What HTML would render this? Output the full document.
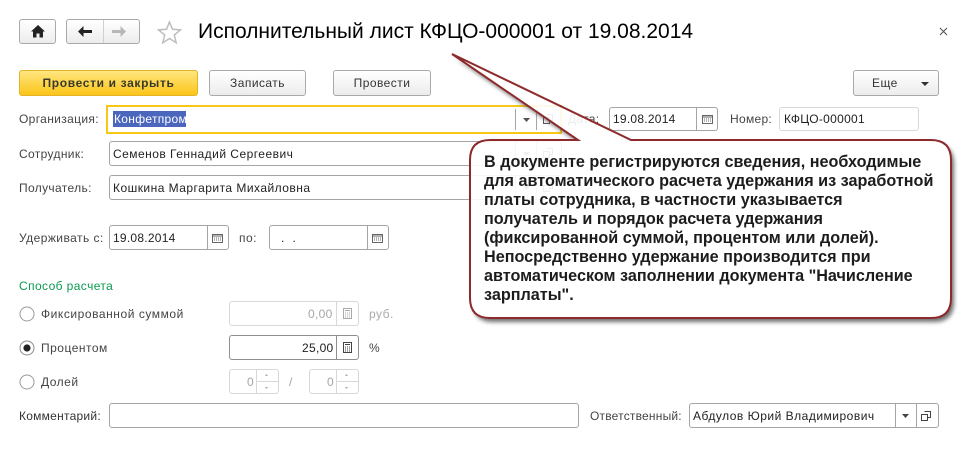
<!DOCTYPE html>
<html><head><meta charset="utf-8"><style>
html,body{margin:0;padding:0;background:#fff}
#p{position:relative;width:965px;height:471px;overflow:hidden;background:#fff;font-family:"Liberation Sans",Arial,sans-serif;font-size:12px;color:#333}
.t{position:absolute;white-space:nowrap;line-height:16px;letter-spacing:.5px}
.b{position:absolute;box-sizing:border-box;border:1px solid #a5a5a5;border-radius:3px;background:#fff}
.btn{position:absolute;box-sizing:border-box;border:1px solid #a9a9a9;border-radius:3px;background:linear-gradient(#fff,#ececec);text-align:center;line-height:25px;letter-spacing:.45px;color:#333}
.dv{position:absolute;top:0;bottom:0;width:1px;background:#a5a5a5}
svg{position:absolute;overflow:visible}
.l{position:absolute;left:484px;white-space:nowrap;font-weight:bold;font-size:16.2px;line-height:19px;color:#1c1c1c}
</style></head><body><div id="p">

<div class="btn" style="left:19px;top:19px;width:37px;height:25px"></div>
<svg style="left:30px;top:25px" width="16" height="13" viewBox="0 0 16 13"><path d="M8 0L15 6.500H13V12.500H9.500V8.500H6.500V12.500H3V6.500H1Z" fill="#222"/></svg>
<div class="btn" style="left:66px;top:19px;width:74px;height:25px"><div class="dv" style="left:36px;background:#d0d0d0"></div></div>
<svg style="left:78px;top:26px" width="15" height="11" viewBox="0 0 15 11"><path d="M0 5.500L5.500 0V4H14V7H5.500V11Z" fill="#222"/></svg>
<svg style="left:112px;top:26px" width="15" height="11" viewBox="0 0 15 11"><path d="M14 5.500L8.500 0V4H0V7H8.500V11Z" fill="#b8b8b8"/></svg>
<svg style="left:157px;top:20px" width="25" height="24" viewBox="0 0 25 24"><path d="M12.500 2L15.500 9.300L23.400 9.900L17.300 15L19.200 22.700L12.500 18.500L5.800 22.700L7.700 15L1.600 9.900L9.500 9.300Z" fill="#fff" stroke="#bdbdbd" stroke-width="1.500"/></svg>
<div class="t" style="left:198px;top:20px;font-size:21px;line-height:24px;color:#000;letter-spacing:0">Исполнительный лист КФЦО-000001 от 19.08.2014</div>
<svg style="left:939px;top:27px" width="9" height="9"><path d="M1 1L8 8M8 1L1 8" stroke="#555" stroke-width="1.100"/></svg>

<div class="btn" style="left:19px;top:70px;width:179px;height:26px;background:linear-gradient(#ffe680,#fbc519);border-color:#e3b32a;font-weight:bold;color:#3a3a2a;letter-spacing:.65px">Провести и закрыть</div>
<div class="btn" style="left:209px;top:70px;width:97px;height:26px">Записать</div>
<div class="btn" style="left:333px;top:70px;width:98px;height:26px">Провести</div>
<div class="btn" style="left:853px;top:70px;width:86px;height:26px;text-align:left;padding-left:18px">Еще</div>
<svg style="left:921px;top:82px" width="8" height="4"><path d="M0 0H8L4 4Z" fill="#333"/></svg>

<div class="t" style="left:19px;top:111px;color:#444;letter-spacing:.35px">Организация:</div>
<div class="b" style="left:106px;top:105px;width:456px;height:29px;border:2px solid #f7c816;border-radius:0"></div>
<div style="position:absolute;left:113px;top:111px;width:73px;height:16px;background:#4b66bd"></div>
<div class="t" style="left:114px;top:111px;color:#fff;letter-spacing:.3px">Конфетпром</div>
<div class="dv" style="left:515px;top:109px;bottom:auto;height:21px"></div>
<svg style="left:523px;top:118px" width="7" height="4"><path d="M0 0H7L3.500 4Z" fill="#555"/></svg>
<div class="dv" style="left:536px;top:109px;bottom:auto;height:21px"></div>
<svg style="left:543px;top:114px" width="10" height="10"><path d="M3.500 .5H9.500V6.500H6.500M.5 3.500H6.500V9.500H.5Z" fill="none" stroke="#555"/></svg>

<div class="t" style="left:568px;top:111px;color:#444;letter-spacing:.3px">Дата:</div>
<div class="b" style="left:609px;top:107px;width:109px;height:24px"><div class="dv" style="left:86px;"></div></div>
<div class="t" style="left:613px;top:111px;letter-spacing:.25px;color:#222">19.08.2014</div>
<svg style="left:702px;top:115px" width="11" height="9"><rect x=".5" y=".5" width="10" height="8" fill="#fff" stroke="#666"/><path d="M1 2H10" stroke="#666"/><path d="M2 4h7M2 6h7" stroke="#666" stroke-dasharray="1 1"/></svg>
<div class="t" style="left:730px;top:111px;color:#444;letter-spacing:.3px">Номер:</div>
<div class="b" style="left:779px;top:107px;width:140px;height:24px;border-color:#d8d8d8"></div>
<div class="t" style="left:784px;top:111px;letter-spacing:.3px;color:#222">КФЦО-000001</div>

<div class="t" style="left:19px;top:146px;color:#444;letter-spacing:.35px">Сотрудник:</div>
<div class="b" style="left:109px;top:141px;width:453px;height:25px"><div class="dv" style="left:405px"></div><div class="dv" style="left:426px"></div></div>
<div class="t" style="left:113px;top:146px;color:#222;letter-spacing:.47px">Семенов Геннадий Сергеевич</div>
<svg style="left:523px;top:152px" width="7" height="4"><path d="M0 0H7L3.500 4Z" fill="#555"/></svg>
<svg style="left:543px;top:148px" width="10" height="10"><path d="M3.500 .5H9.500V6.500H6.500M.5 3.500H6.500V9.500H.5Z" fill="none" stroke="#555"/></svg>
<div class="t" style="left:19px;top:180px;color:#444;letter-spacing:.35px">Получатель:</div>
<div class="b" style="left:109px;top:175px;width:453px;height:25px"><div class="dv" style="left:405px"></div><div class="dv" style="left:426px"></div></div>
<div class="t" style="left:113px;top:180px;color:#222;letter-spacing:.47px">Кошкина Маргарита Михайловна</div>
<svg style="left:523px;top:186px" width="7" height="4"><path d="M0 0H7L3.500 4Z" fill="#555"/></svg>
<svg style="left:543px;top:182px" width="10" height="10"><path d="M3.500 .5H9.500V6.500H6.500M.5 3.500H6.500V9.500H.5Z" fill="none" stroke="#555"/></svg>

<div class="t" style="left:19px;top:230px;color:#444;letter-spacing:.45px">Удерживать с:</div>
<div class="b" style="left:109px;top:225px;width:120px;height:25px"><div class="dv" style="left:97px"></div></div>
<div class="t" style="left:113px;top:230px;letter-spacing:.25px;color:#222">19.08.2014</div>
<svg style="left:212px;top:234px" width="11" height="9"><rect x=".5" y=".5" width="10" height="8" fill="#fff" stroke="#666"/><path d="M1 2H10" stroke="#666"/><path d="M2 4h7M2 6h7" stroke="#666" stroke-dasharray="1 1"/></svg>
<div class="t" style="left:239px;top:230px;color:#444">по:</div>
<div class="b" style="left:269px;top:225px;width:120px;height:25px"><div class="dv" style="left:97px"></div></div>
<div class="t" style="left:281px;top:230px;color:#222">.&nbsp;&nbsp;.</div>
<svg style="left:372px;top:234px" width="11" height="9"><rect x=".5" y=".5" width="10" height="8" fill="#fff" stroke="#666"/><path d="M1 2H10" stroke="#666"/><path d="M2 4h7M2 6h7" stroke="#666" stroke-dasharray="1 1"/></svg>

<div class="t" style="left:19px;top:278px;color:#0a9a50;letter-spacing:.4px">Способ расчета</div>

<svg style="left:19px;top:306px" width="17" height="17"><circle cx="8" cy="8" r="7" fill="#fff" stroke="#9a9a9a"/></svg>
<div class="t" style="left:41px;top:306px;color:#444;letter-spacing:.55px">Фиксированной суммой</div>
<div class="b" style="left:229px;top:301px;width:130px;height:25px;border-color:#d8d8d8"><div class="dv" style="left:106px;background:#d8d8d8"></div></div>
<div class="t" style="left:308px;top:306px;color:#a5a5a5;letter-spacing:.3px">0,00</div>
<svg style="left:343px;top:308px" width="9" height="11"><rect x=".5" y=".5" width="8" height="10" fill="#fff" stroke="#aaa"/><path d="M2 2.500H7" stroke="#aaa"/><path d="M2 5h5M2 7h5M2 9h5" stroke="#aaa" stroke-dasharray="1 1"/></svg>
<div class="t" style="left:369px;top:306px;color:#aaa">руб.</div>

<svg style="left:19px;top:340px" width="17" height="17"><circle cx="8" cy="8" r="7" fill="#fff" stroke="#8a8a8a"/><circle cx="8" cy="8" r="3.600" fill="#222"/></svg>
<div class="t" style="left:41px;top:340px;color:#444">Процентом</div>
<div class="b" style="left:229px;top:335px;width:130px;height:25px;border-color:#8f8f8f"><div class="dv" style="left:106px;background:#8f8f8f"></div></div>
<div class="t" style="left:302px;top:340px;color:#222;letter-spacing:.3px">25,00</div>
<svg style="left:343px;top:342px" width="9" height="11"><rect x=".5" y=".5" width="8" height="10" fill="#fff" stroke="#444"/><path d="M2 2.500H7" stroke="#444"/><path d="M2 5h5M2 7h5M2 9h5" stroke="#444" stroke-dasharray="1 1"/></svg>
<div class="t" style="left:369px;top:340px;color:#444">%</div>

<svg style="left:19px;top:374px" width="17" height="17"><circle cx="8" cy="8" r="7" fill="#fff" stroke="#9a9a9a"/></svg>
<div class="t" style="left:41px;top:374px;color:#444">Долей</div>
<div class="b" style="left:229px;top:369px;width:50px;height:25px;border-color:#d8d8d8"><div class="dv" style="left:26px;background:#d8d8d8"></div><div style="position:absolute;left:26px;right:0;top:11px;height:1px;background:#d8d8d8"></div></div>
<div class="t" style="left:247px;top:374px;color:#a5a5a5">0</div>
<div class="t" style="left:289px;top:374px;color:#a5a5a5">/</div>
<div class="b" style="left:309px;top:369px;width:50px;height:25px;border-color:#d8d8d8"><div class="dv" style="left:26px;background:#d8d8d8"></div><div style="position:absolute;left:26px;right:0;top:11px;height:1px;background:#d8d8d8"></div></div>
<div class="t" style="left:327px;top:374px;color:#a5a5a5">0</div>
<svg style="left:265px;top:373px" width="90" height="18"><path d="M0 3h3L1.500 1ZM80 3h3L81.500 1ZM0 14h3L1.500 16ZM80 14h3L81.500 16Z" fill="#aaa"/></svg>

<div class="t" style="left:19px;top:408px;color:#333;letter-spacing:.25px">Комментарий:</div>
<div class="b" style="left:109px;top:403px;width:470px;height:25px"></div>
<div class="t" style="left:590px;top:408px;color:#444;letter-spacing:.2px">Ответственный:</div>
<div class="b" style="left:689px;top:403px;width:250px;height:25px"><div class="dv" style="left:205px"></div><div class="dv" style="left:226px"></div></div>
<div class="t" style="left:693px;top:408px;color:#222">Абдулов Юрий Владимирович</div>
<svg style="left:902px;top:414px" width="7" height="4"><path d="M0 0H7L3.500 4Z" fill="#444"/></svg>
<svg style="left:921px;top:411px" width="10" height="10"><path d="M3.500 .5H9.500V6.500H6.500M.5 3.500H6.500V9.500H.5Z" fill="none" stroke="#444"/></svg>

<svg style="left:0;top:0" width="965" height="471" viewBox="0 0 965 471">
<defs>
<filter id="s" x="-10%" y="-10%" width="120%" height="130%"><feGaussianBlur stdDeviation="2"/></filter>
<mask id="m" maskUnits="userSpaceOnUse" x="0" y="0" width="965" height="471"><rect width="965" height="471" fill="#fff"/><path d="M490 140H578L452 54L631 140H931Q951 140 951 160V298Q951 318 931 318H490Q470 318 470 298V160Q470 140 490 140Z" fill="#000"/></mask>
</defs>
<g mask="url(#m)"><path d="M490 140H578L452 54L631 140H931Q951 140 951 160V298Q951 318 931 318H490Q470 318 470 298V160Q470 140 490 140Z" fill="#555" transform="translate(3,4)" filter="url(#s)" opacity=".85"/></g>
<path d="M490 140H578L452 54L631 140H931Q951 140 951 160V298Q951 318 931 318H490Q470 318 470 298V160Q470 140 490 140Z" fill="#fff" fill-opacity=".9" stroke="#8e2a2c" stroke-width="2"/>
</svg>

<div class="l" style="top:153px">В документе регистрируются сведения, необходимые</div>
<div class="l" style="top:172px">для автоматического расчета удержания из заработной</div>
<div class="l" style="top:191px">платы сотрудника, в частности указывается</div>
<div class="l" style="top:210px">получатель и порядок расчета удержания</div>
<div class="l" style="top:229px">(фиксированной суммой, процентом или долей).</div>
<div class="l" style="top:248px">Непосредственно удержание производится при</div>
<div class="l" style="top:267px">автоматическом заполнении документа "Начисление</div>
<div class="l" style="top:286px">зарплаты".</div>

</div></body></html>
